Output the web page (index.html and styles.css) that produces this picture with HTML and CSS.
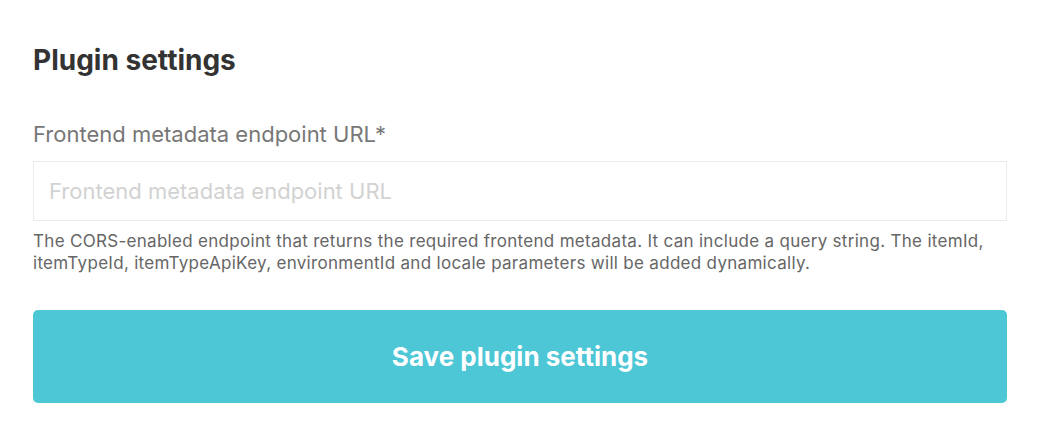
FILE: index.html
```html
<!DOCTYPE html>
<html>
<head>
<meta charset="utf-8">
<link rel="stylesheet" href="styles.css">
</head>
<body>
<div class="page">
  <h1 class="title">Plugin settings</h1>
  <div class="field">
    <label class="label" for="url">Frontend metadata endpoint URL*</label>
    <input id="url" class="input" type="text" placeholder="Frontend metadata endpoint URL">
    <p class="hint">The CORS-enabled endpoint that returns the required frontend metadata. It can include a query string. The itemId, itemTypeId, itemTypeApiKey, environmentId and locale parameters will be added dynamically.</p>
  </div>
  <button class="save">Save plugin settings</button>
</div>
</body>
</html>
```
FILE: styles.css
```css
html, body {
  margin: 0;
  padding: 0;
  background: #fff;
}
.page {
  font-family: Inter, "Liberation Sans", sans-serif;
  padding: 43px 36px 0 33px;
  display: flex;
  flex-direction: column;
}
.title {
  margin: 0;
  font-size: 28px;
  font-weight: 700;
  color: #333;
  line-height: 34px;
}
.field {
  margin-top: 44px;
  display: flex;
  flex-direction: column;
}
.label {
  font-size: 22px;
  color: #777;
  line-height: 26px;
}
.input {
  margin-top: 14px;
  height: 60px;
  box-sizing: border-box;
  border: 1px solid #ebebeb;
  padding: 0 15px;
  font-family: inherit;
  font-size: 22px;
  color: #333;
  outline: none;
}
.input::placeholder {
  color: #d2d2d2;
}
.hint {
  margin: 9px 0 0;
  font-size: 17px;
  letter-spacing: 0.3px;
  line-height: 22px;
  color: #666;
}
.save {
  margin-top: 36px;
  height: 93px;
  border: none;
  border-radius: 5px;
  background: #4dc6d6;
  color: #fff;
  font-family: inherit;
  font-size: 26px;
  font-weight: 700;
}
```
